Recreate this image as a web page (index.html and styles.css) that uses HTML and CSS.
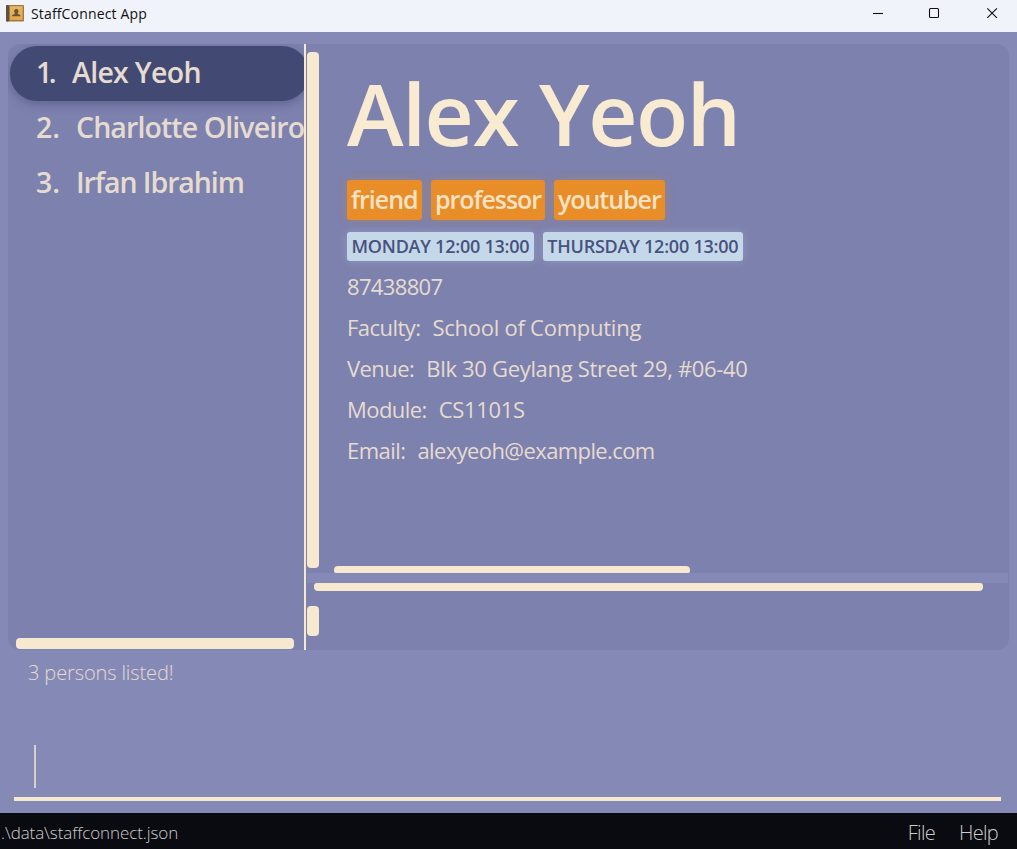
FILE: index.html
```html
<!DOCTYPE html>
<html lang="en">
<head>
<meta charset="utf-8">
<title>StaffConnect App</title>
<link rel="stylesheet" href="styles.css">
</head>
<body>
<header class="titlebar">
  <svg class="app-icon" width="18" height="17" viewBox="0 0 18 17">
    <defs><linearGradient id="book" x1="0" y1="0" x2="0" y2="1"><stop offset="0" stop-color="#e6b765"/><stop offset="1" stop-color="#e0a64c"/></linearGradient></defs>
    <rect width="18" height="16.5" rx="1" fill="#a0783c"/>
    <rect x="0" width="3" height="16.5" rx="1" fill="#5b5149"/>
    <rect x="4" y="1.2" width="12.7" height="13.8" fill="url(#book)"/>
    <path d="M10.3 4c1.6 0 2.3 1 2.1 2.4-.1 1-.6 1.500-.8 2 .1.900 2.900.8 3.200 2.900H5.800c.3-2.100 3.100-2 3.200-2.900-.2-.5-.7-1-.8-2C8 5 8.700 4 10.300 4z" fill="#6b552f"/>
  </svg>
  <span class="app-name">StaffConnect App</span>
  <svg class="window-buttons" width="126" height="12" viewBox="0 0 126 12" fill="none" stroke="#111">
    <path d="M0 6.500h10" stroke-width="1.100"/>
    <rect x="56.500" y="1.500" width="9" height="9" rx="1" stroke-width="1.100"/>
    <path d="M114.300 1.300l9.600 9.600M123.900 1.300l-9.600 9.600" stroke-width="1.100"/>
  </svg>
</header>
<main class="workspace">
  <section class="split">
    <aside class="person-list">
      <ul class="persons">
        <li class="person selected"><span class="num">1.</span><span class="name n1">Alex Yeoh</span></li>
        <li class="person"><span class="num">2.</span><span class="name n2">Charlotte Oliveiro</span></li>
        <li class="person"><span class="num">3.</span><span class="name n3">Irfan Ibrahim</span></li>
      </ul>
      <div class="list-scroll"></div>
    </aside>
    <div class="divider"></div>
    <div class="right">
      <section class="details">
        <div class="v-scroll"></div>
        <div class="details-body">
          <div class="card">
            <h1 class="title">Alex Yeoh</h1>
            <div class="tags"><span class="tag t1">friend</span><span class="tag t2">professor</span><span class="tag t3">youtuber</span></div>
            <div class="slots"><span class="slot">MONDAY 12:00 13:00</span><span class="slot">THURSDAY 12:00 13:00</span></div>
            <p class="row"><span class="phone">87438807</span></p>
            <p class="row"><span class="label">Faculty:</span><span class="faculty">School of Computing</span></p>
            <p class="row"><span class="label">Venue:</span><span class="venue">Blk 30 Geylang Street 29, #06-40</span></p>
            <p class="row"><span class="label">Module:</span><span class="module">CS1101S</span></p>
            <p class="row"><span class="label">Email:</span><span class="email">alexyeoh@example.com</span></p>
          </div>
          <div class="h-scroll"></div>
        </div>
      </section>
      <section class="meetings">
        <div class="h-scroll-wide"></div>
        <div class="v-scroll-short"></div>
      </section>
    </div>
  </section>
  <p class="result">3 persons listed!</p>
  <div class="command"><div class="caret"></div></div>
</main>
<footer class="statusbar">
  <span class="path">.\data\staffconnect.json</span>
  <nav class="menu"><span>File</span><span>Help</span></nav>
</footer>
</body>
</html>
```
FILE: styles.css
```css
* { box-sizing: border-box; margin: 0; padding: 0; }
body {
  width: 1017px; height: 849px; overflow: hidden;
  display: flex; flex-direction: column;
  background: #8589b6; color: #e6dbd0;
  font-family: "Open Sans", "Noto Sans", sans-serif;
  white-space: nowrap;
}
.titlebar { height: 32px; display: flex; align-items: flex-start; background: #f0f3fa; color: #111; padding-left: 6px; }
.app-icon { margin-top: 5px; }
.app-name { font-size: 14px; line-height: 28px; margin-left: 7px; letter-spacing: .15px; }
.window-buttons { margin: 7px 18px 0 auto; }
.workspace { flex: 1; display: flex; flex-direction: column; padding: 12px 8px 0; }
.split { height: 606px; display: flex; background: #7d81ad; border-radius: 12px; overflow: hidden; }
.person-list { width: 295.500px; display: flex; flex-direction: column; justify-content: space-between; overflow: hidden; padding: 2px 0 1px 2px; }
.persons { list-style: none; }
.person { width: 299px; height: 55px; display: flex; padding-left: 26px; font-size: 28.500px; font-weight: 600; line-height: 53px; }
.selected { background: #424a73; border-radius: 27px; box-shadow: 0 3px 9px rgba(66,74,115,.5); }
.num { width: 40px; flex: none; }
.selected .num { width: 36px; letter-spacing: -3.500px; }
.n1 { letter-spacing: -.7px; }
.n2 { letter-spacing: -.9px; }
.n3 { letter-spacing: -1.080px; }
.list-scroll { width: 278px; height: 11.500px; margin-left: 5.500px; border-radius: 4px; background: #f7e8d0; flex: none; }
.divider { width: 2.500px; background: #f7e8d0; }
.right { flex: 1; display: flex; flex-direction: column; gap: 10px; background: linear-gradient(#8589b6,#8589b6) 1px 529px / 701px 10px no-repeat; padding-left: 1px; }
.details { height: 529px; display: flex; }
.v-scroll { width: 11.500px; height: 516px; margin-top: 7.500px; border-radius: 4px; background: #f7e8d0; }
.details-body { display: flex; flex-direction: column; justify-content: space-between; margin-left: 15px; }
.card { padding-left: 13.500px; }
.title { font-size: 85.500px; line-height: 98px; height: 136px; padding-top: 20px; font-weight: 600; color: #f9ead2; letter-spacing: -1.400px; }
.tags, .slots { display: flex; gap: 9px; }
.tag { height: 40px; line-height: 38px; padding: 0 4px; border-radius: 3px; background: #e88d27; color: #f8e2c3; font-size: 25px; font-weight: 550; box-shadow: 0 0 10px rgba(232,141,39,.3); }
.t1 { width: 75px; letter-spacing: -1px; }
.t2 { width: 114px; letter-spacing: -1.050px; }
.t3 { width: 111px; letter-spacing: -1.050px; }
.slots { margin: 12px 0 5px; }
.slot { height: 29px; line-height: 29px; padding: 0 4.500px; border-radius: 3px; background: #c5d8e9; color: #47527e; font-size: 18px; font-weight: 600; letter-spacing: -.24px; box-shadow: 0 0 10px rgba(197,216,233,.3); }
.row { height: 41px; line-height: 41px; font-size: 22px; display: flex; }
.label { margin-right: 12px; letter-spacing: -.55px; }
.phone { letter-spacing: -.65px; }
.faculty { letter-spacing: -.25px; }
.venue { letter-spacing: -.32px; }
.module { letter-spacing: -.35px; }
.email { letter-spacing: -.6px; }
.h-scroll { width: 356px; height: 7px; border-radius: 4px 4px 2px 2px; background: #f7e8d0; }
.meetings { flex: 1; }
.h-scroll-wide { width: 669px; height: 8px; margin-left: 7px; border-radius: 3px 3px 4px 4px; background: #f7e8d0; }
.v-scroll-short { width: 11.500px; height: 30px; margin-top: 15px; border-radius: 4px; background: #f7e8d0; }
.result { height: 46px; line-height: 46px; padding-left: 20px; font-size: 20px; font-weight: 300; letter-spacing: -.12px; }
.command { height: 64px; margin: 41px 8px 0 6px; padding: 8px 0 0 20px; border-bottom: 4px solid #f7e8d0; }
.caret { width: 2px; height: 43px; background: #d9cfcc; }
.statusbar { height: 36px; background: #090b10; color: #ccc; display: flex; justify-content: space-between; line-height: 39px; }
.path { font-size: 17px; font-weight: 300; padding-left: 1px; letter-spacing: -.09px; }
.menu { display: flex; gap: 24px; font-size: 20px; font-weight: 300; padding-right: 19px; letter-spacing: -.7px; }
```
